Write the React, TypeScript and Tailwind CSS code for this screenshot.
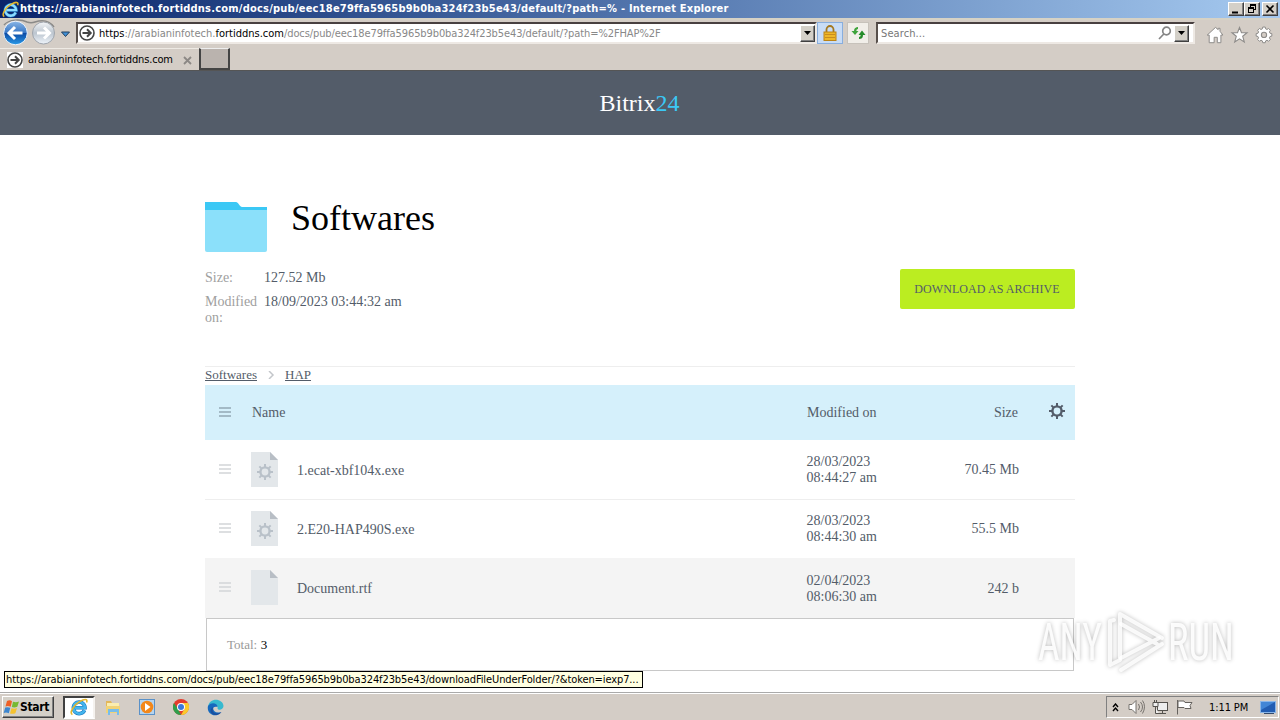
import React from 'react';

interface FileRow {
  name: string;
  date: string;
  time: string;
  size: string;
  program: boolean;
  rowClass: string;
}

const files: FileRow[] = [
  { name: '1.ecat-xbf104x.exe', date: '28/03/2023', time: '08:44:27 am', size: '70.45 Mb', program: true, rowClass: 'h-[60px] border-b border-[#eee]' },
  { name: '2.E20-HAP490S.exe', date: '28/03/2023', time: '08:44:30 am', size: '55.5 Mb', program: true, rowClass: 'h-[58px]' },
  { name: 'Document.rtf', date: '02/04/2023', time: '08:06:30 am', size: '242 b', program: false, rowClass: 'h-[60px] bg-[#f4f4f4]' },
];

const raised = 'border border-t-white border-l-white border-r-[#404040] border-b-[#404040] bg-[#d4d0c8] shadow-[inset_-1px_-1px_0_#808080]';

const Gear: React.FC<{ size: number; color: string; hole: string }> = ({ size, color, hole }) => (
  <svg width={size} height={size} viewBox="0 0 16 16">
    {[0, 45, 90, 135].map(a => (
      <rect key={a} x="7" y="0" width="2" height="16" fill={color} transform={`rotate(${a} 8 8)`} />
    ))}
    <circle cx="8" cy="8" r="5.8" fill={color} />
    <circle cx="8" cy="8" r="3.4" fill={hole} />
  </svg>
);

const Lines: React.FC<{ color: string }> = ({ color }) => (
  <svg width="12" height="10" viewBox="0 0 12 10" fill="none">
    <path d="M0 1h12M0 5h12M0 9h12" stroke={color} strokeWidth="1.6" />
  </svg>
);

const IeIcon: React.FC<{ size: number; color?: string }> = ({ size, color = '#43b5ee' }) => (
  <svg width={size} height={size} viewBox="0 0 18 18" fill="none">
    <path d="M14.5 12.2A5.8 5.8 0 1 1 15 9.7H5" stroke="#1976bd" strokeWidth="3.6" />
    <path d="M14.5 12.2A5.8 5.8 0 1 1 15 9.7H5" stroke={color} strokeWidth="2.5" />
    <path d="M2.4 16.6C-1 14.5 3.8 7 10 3.4 14 .9 18 .4 16.6 4.4" stroke="#e5b72d" strokeWidth="1.6" />
  </svg>
);

const PageIcon = () => (
  <svg className="shrink-0" width="16" height="16" viewBox="0 0 16 16" fill="none">
    <rect width="16" height="16" fill="#fff" />
    <circle cx="8" cy="8" r="7" stroke="#444" strokeWidth="1.6" />
    <path d="M3.5 8h8M8 4.3 11.7 8 8 11.7" stroke="#444" strokeWidth="2" />
  </svg>
);

const DropButton = () => (
  <span className={`flex h-[17px] w-[15px] items-center justify-center ${raised}`}>
    <svg width="7" height="4" viewBox="0 0 7 4"><path d="M0 0h7L3.5 4z" fill="#000" /></svg>
  </span>
);

const TitleBar = () => (
  <div className="flex h-[18px] items-center bg-linear-to-r from-[#0a246a] to-[#a6caf0] pl-[2px] pr-[2px]">
    <IeIcon size={17} color="#8edcff" />
    <span className="ml-px pt-px whitespace-nowrap text-[11px] font-bold tracking-[0.22px] text-white">
      https://arabianinfotech.fortiddns.com/docs/pub/eec18e79ffa5965b9b0ba324f23b5e43/default/?path=% - Internet Explorer
    </span>
    <div className="ml-auto flex">
      <span className={`h-[14px] w-[16px] ${raised}`}>
        <svg width="14" height="12"><path d="M3 9.5h6" stroke="#000" strokeWidth="2" /></svg>
      </span>
      <span className={`h-[14px] w-[16px] ${raised}`}>
        <svg width="14" height="12" fill="none" stroke="#000" shapeRendering="crispEdges">
          <path d="M5 1.5h6M5 2.5h6M5.500 1v3M10.500 1v6M8 6.500h3M3 4.500h6M3 5.500h6M3.500 4v6M8.500 4v6M3 9.500h6" />
        </svg>
      </span>
      <span className={`ml-[2px] h-[14px] w-[16px] ${raised}`}>
        <svg width="14" height="12"><path d="M3.5 2.5l7 7M10.5 2.5l-7 7" stroke="#000" strokeWidth="1.6" /></svg>
      </span>
    </div>
  </div>
);

const NavButtons = () => (
  <svg width="74" height="28" viewBox="0 0 74 28" fill="none">
    <defs>
      <linearGradient id="back" x1="0" y1="0" x2="0" y2="1">
        <stop offset="0" stopColor="#8ab6e6" />
        <stop offset=".48" stopColor="#3a78c6" />
        <stop offset=".52" stopColor="#0d4ca6" />
        <stop offset="1" stopColor="#2a9be8" />
      </linearGradient>
      <linearGradient id="fwd" x1="0" y1="0" x2="0" y2="1">
        <stop offset="0" stopColor="#f4f6f8" />
        <stop offset=".5" stopColor="#bcc5cf" />
        <stop offset="1" stopColor="#eef4fa" />
      </linearGradient>
    </defs>
    <path d="M4 6C9 0 21 0 27 3c3 1 5 1 8 0 6-2 14-2 19 5" stroke="#8b8a88" strokeWidth="1.5" />
    <circle cx="15.500" cy="14" r="11.800" fill="url(#back)" stroke="#f0f4fa" />
    <path d="M9.500 14h13M15 8 9 14l6 6" stroke="#fff" strokeWidth="3" />
    <circle cx="43.500" cy="14" r="11" fill="url(#fwd)" stroke="#9fa5ad" />
    <path d="M37 14h12M44 8.500 49.500 14 44 19.500" stroke="#fff" strokeWidth="3" />
    <path d="M61.500 13h8l-4 4.500z" fill="#3f8fd6" stroke="#24415e" />
  </svg>
);

const AddressBar = () => (
  <div className="flex h-[28px] items-start bg-[#d4cdc6]">
    <div className="-mt-px w-[76px] shrink-0"><NavButtons /></div>
    <div className="mt-[2px] flex h-[22px] w-[741px] items-center border-2 border-t-[#484040] border-l-[#58504c] border-r-[#eee9e4] border-b-[#eee9e4] bg-white pl-[1px]">
      <PageIcon />
      <span className="ml-[4px] pt-[2px] whitespace-nowrap text-[11px] text-[#888]">
        <span className="text-black">https</span>://arabianinfotech.<span className="text-black">fortiddns.com</span>
        <span className="tracking-[-0.1px]">/docs/pub/eec18e79ffa5965b9b0ba324f23b5e43/default/?path=%2FHAP%2F</span>
      </span>
      <span className="ml-auto"><DropButton /></span>
    </div>
    <span className="mt-[2px] flex h-[22px] w-[26px] items-center justify-center border border-[#88aede] bg-[#c8dcf6]">
      <svg width="14" height="16" viewBox="0 0 14 16" fill="none">
        <path d="M3.500 8V4.500a3.500 3.500 0 0 1 7 0V8" stroke="#a47820" strokeWidth="1.800" />
        <rect x="1" y="7" width="12" height="8.500" fill="#eeb727" stroke="#bb8316" />
        <path d="M2 9.500h10M2 12.500h10" stroke="#c98d1d" />
      </svg>
    </span>
    <span className="ml-[4px] mt-[2px] flex h-[22px] w-[22px] items-center justify-center border border-[#c7c2bb] bg-[#f1eee9]">
      <svg width="15" height="14" viewBox="0 0 15 14">
        <path d="M7 1C5 1 3 2 3 5H.5L4 9l3.500-4H5.300Q5.300 3 7 3z" fill="#3ea33b" />
        <path d="M8 13c2.500 0 4-1 4-4h2.500L11 4.500 7.500 9h2.200q0 2-1.700 2z" fill="#258c2b" />
      </svg>
    </span>
    <div className="ml-[7px] mt-[2px] flex h-[22px] w-[319px] items-center border-2 border-t-[#484040] border-l-[#58504c] border-r-[#eee9e4] border-b-[#eee9e4] bg-white pl-[3px] pr-[4px]">
      <span className="pt-[2px] text-[11px] tracking-[0.1px] text-[#777]">Search...</span>
      <svg className="ml-auto mr-[2px]" width="14" height="14" viewBox="0 0 14 14" fill="none" stroke="#858585" strokeWidth="1.700">
        <circle cx="8.500" cy="5" r="3.800" /><path d="M5.800 8 1 13" />
      </svg>
      <DropButton />
    </div>
    <svg className="ml-[10px] mt-[6px]" width="70" height="20" viewBox="0 0 70 20" fill="#fff" stroke="#8d8b89" strokeWidth="1.100">
      <path transform="translate(1.500 .5) scale(.9)" d="M3 9.500H.8L10 1l3 2.500V2h2v3.300L18.200 9.500H16V18h-4v-6H8.500v6H3z" />
      <path d="m34.500 1.500 2 5.200h5.500l-4.300 3.500 1.600 5.700L34.500 12.800l-4.800 3.100 1.600-5.700L27 6.700h5.500z" />
      <path transform="translate(5.900 -1.200) scale(.9)" d="M57.600 2.500h2.800l.4 2 1.500.7 1.800-1.100 2 2-1.100 1.800.7 1.500 2 .4v2.800l-2 .4-.7 1.500 1.100 1.800-2 2-1.800-1.100-1.500.7-.4 2h-2.800l-.4-2-1.500-.7-1.800 1.100-2-2 1.100-1.800-.7-1.500-2-.4V9.800l2-.4.7-1.500-1.100-1.800 2-2 1.800 1.100 1.500-.7z" />
      <circle cx="59" cy="8.900" r="2.600" fill="#d4cdc6" />
    </svg>
  </div>
);

const Tabs = () => (
  <div className="flex h-[23px] border-b border-b-[#555] bg-[#d4cdc6]">
    <div className="flex h-[22px] w-[199px] items-center border-t border-t-[#eeeae4] pl-[7px] pt-px">
      <PageIcon />
      <span className="ml-[5px] pt-px whitespace-nowrap text-[11px] tracking-[-0.16px] text-black">arabianinfotech.fortiddns.com</span>
      <svg className="ml-auto mr-[7px]" width="9" height="9" viewBox="0 0 9 9"><path d="M1 1l7 7M8 1 1 8" stroke="#8c8885" strokeWidth="1.800" /></svg>
    </div>
    <div className="h-[22px] w-[31px] border-2 border-t border-l-[#444] border-t-[#eee] border-r-[#444] border-b-[#444] bg-[#bab3ae]" />
  </div>
);

const FileIcon: React.FC<{ program: boolean }> = ({ program }) => (
  <div className="grid h-[35px] w-[27px] place-items-center">
    <svg className="col-start-1 row-start-1" width="27" height="35" viewBox="0 0 27 35">
      <path d="M0 0h19l8 8v27H0z" fill="#e3e7ea" /><path d="M19 0l8 8h-8z" fill="#b8bec5" />
    </svg>
    {program && <div className="col-start-1 row-start-1 mt-[5px] ml-[1px]"><Gear size={16} color="#b9c1c9" hole="#e3e7ea" /></div>}
  </div>
);

const Row: React.FC<{ file: FileRow }> = ({ file }) => (
  <div className={`flex items-center text-[14px] leading-[16px] text-[#535c69] ${file.rowClass}`}>
    <span className="ml-[14px] w-[32px] pb-[2px]"><Lines color="#d2d5d8" /></span>
    <span className="pb-px"><FileIcon program={file.program} /></span>
    <span className="ml-[19px] mt-[2px] w-[509.500px]">{file.name}</span>
    <span className={file.program ? 'w-[110px]' : 'w-[110px] pt-[2px]'}>{file.date}<br />{file.time}</span>
    <span className={file.program ? 'w-[102.500px] text-right' : 'w-[102.500px] pt-[2px] text-right'}>{file.size}</span>
  </div>
);

const Watermark = () => (
  <svg className="absolute left-[1030px] top-[531px] overflow-visible drop-shadow-[0_0_2px_rgba(0,0,0,0.3)]" width="212" height="78" viewBox="0 0 212 78" fill="none">
    <g fill="#fff" fillOpacity=".9" fontFamily="Roboto" fontSize="52">
      <text x="8" y="58" textLength="64" lengthAdjust="spacingAndGlyphs">ANY</text>
      <text x="138" y="58" textLength="66" lengthAdjust="spacingAndGlyphs">RUN</text>
    </g>
    <g stroke="#fff" strokeWidth="4" strokeOpacity=".85" strokeLinecap="round" strokeLinejoin="round">
      <path d="M90 56V12l42 24" /><path d="M84 18l-4 1v44l10-5" />
      <path d="M91 22l36 20M91 56l38-20M91 68l41-26" />
    </g>
  </svg>
);

const Page = () => (
  <div className="relative h-[621px] bg-white [font-family:'Liberation_Serif',serif]">
    <div className="flex h-[64px] items-center justify-center bg-[#535c69] pr-[1px] text-[24px] text-white">
      Bitrix<span className="text-[#3bc8f5]">24</span>
    </div>
    <main className="mx-auto w-[870px] pt-[67px]">
      <div className="flex h-[50px]">
        <svg width="62" height="50" viewBox="0 0 62 50">
          <path d="M0 0h31c2 0 4 5 6 5h25v5H0z" fill="#3bc8f5" />
          <path d="M0 8h62v40q0 2-2 2H2q-2 0-2-2z" fill="#8be0fa" />
        </svg>
        <h1 className="ml-[24px] -mt-[5px] text-[36px] leading-[42px] text-black">Softwares</h1>
      </div>
      <div className="mt-[17px] flex h-[98px] justify-between border-b border-[#eee] text-[14px] leading-[16px]">
        <div className="grid w-[220px] grid-cols-[59px_1fr] content-start gap-y-[8px] pt-px text-[#535c69]">
          <span className="text-[#a0a0a0]">Size:</span><span>127.52 Mb</span>
          <span className="text-[#a0a0a0]">Modified on:</span><span>18/09/2023 03:44:32 am</span>
        </div>
        <button className="h-[40px] w-[175px] rounded-[2px] bg-[#bbed21] pr-[1px] text-[12px] tracking-[0.08px] text-[#535c69]">DOWNLOAD AS ARCHIVE</button>
      </div>
      <div className="flex h-[18px] items-center pb-[3px] text-[13px] leading-[16px] text-[#535c69]">
        <span className="w-[62px] underline">Softwares</span>
        <svg width="18" height="8" viewBox="0 0 18 8" fill="none"><path d="m2 0 4 4-4 4" stroke="#c3c6ca" strokeWidth="1.500" /></svg>
        <span className="underline">HAP</span>
      </div>
      <div className="flex h-[55px] items-center bg-[#d5f0fb] text-[14px] text-[#535c69]">
        <span className="ml-[14px] w-[33px] pb-[2px]"><Lines color="#92a8b5" /></span>
        <span className="w-[555px]">Name</span>
        <span className="w-[110px]">Modified on</span>
        <span className="w-[101px] text-right">Size</span>
        <span className="ml-[31px] -mt-[4px]"><Gear size={16} color="#535c69" hole="#d5f0fb" /></span>
      </div>
      {files.map(file => <Row key={file.name} file={file} />)}
      <div className="mx-px flex h-[53px] items-center border border-[#c8c8c8] bg-white pl-[20px] text-[13px] text-[#999]">
        Total:<span className="ml-[3.500px] text-black">3</span>
      </div>
    </main>
    <Watermark />
  </div>
);

const Taskbar = () => (
  <div className="flex h-[28px] items-center border-t border-[#aaa] bg-[#d4cdc6] pl-[2px] pt-[1px] pr-px shadow-[inset_0_1px_0_#fff]">
    <span className={`flex h-[22px] w-[52px] items-center ${raised}`}>
      <svg width="17" height="17" viewBox="0 0 17 17">
        <path d="M4 2q3-1.500 5 .3L7.700 7.800Q5 6.500 2.500 7.500z" fill="#ee6027" />
        <path d="M10 2.700q3 1 6-.2l-1.700 5.300q-3 1.200-5.500.2z" fill="#77b934" />
        <path d="M2.200 8.600q2.500-1 5.100.2l-1.500 5.400Q3 13 .7 14z" fill="#3d86cf" />
        <path d="M8.500 9.200q3 .9 5.500-.1l-1.600 5.200q-2.700 1-5.400.2z" fill="#f5c22f" />
      </svg>
      <span className="text-[12px] font-bold tracking-[-0.3px]">Start</span>
    </span>
    <span className="ml-[9px] flex h-[23px] w-[32px] items-center justify-center border-2 border-t-[#404040] border-l-[#404040] border-r-[#f5f2ee] border-b-white bg-white"><IeIcon size={18} /></span>
    <svg className="ml-[9px]" width="18" height="18" viewBox="0 0 18 18">
      <path d="M2 3h5l1 2h7v10H2z" fill="#e3b75a" /><path d="M3 5h12v7H3z" fill="#faedb0" />
      <path d="M2 8h14v7H2z" fill="#f1d377" /><path d="M4 17v-6h11v6h-2v-3H6v3z" fill="#77bdeb" />
    </svg>
    <svg className="ml-[17px]" width="16" height="16" viewBox="0 0 16 16">
      <rect x=".5" y=".5" width="15" height="15" fill="#b5d4ef" stroke="#5a91c8" />
      <circle cx="8" cy="8" r="6.300" fill="#f38719" /><path d="m6 4 5.500 4L6 12z" fill="#fff" />
    </svg>
    <svg className="ml-[18px]" width="16" height="16" viewBox="0 0 16 16">
      <circle cx="8" cy="8" r="8" fill="#e33c2e" />
      <path d="M1 4l4 6 3 6A8 8 0 0 1 1 4z" fill="#2f9e4c" />
      <path d="M8 4h7a8 8 0 0 1-7 12l4-7z" fill="#fbca2c" />
      <circle cx="8" cy="8" r="4" fill="#fff" /><circle cx="8" cy="8" r="3" fill="#3b78dc" />
    </svg>
    <svg className="ml-[18px]" width="17" height="17" viewBox="0 0 17 17">
      <path d="M1 8C2-2 16-1 16.500 7c0 4-6 5-6 2 1-4-5-5-9.500-1z" fill="#37b9cf" />
      <path d="M1 7c4-5 10-2 9.500 1C3 6 6 16 14 13 9 20-1 15 1 7z" fill="#1769bd" />
      <path d="M6 8c-2 6 3 8 8.500 5-3 5-11 3-11-1 0-2 1-3 2.500-4z" fill="#1c4f9e" />
    </svg>
    <div className="ml-auto flex h-[22px] w-[173px] items-center border border-t-[#808080] border-l-[#808080] border-r-white border-b-white pl-[5px]">
      <svg width="7" height="9" viewBox="0 0 7 9" fill="none" stroke="#000" strokeWidth="1.400"><path d="m1 4 2.500-3L6 4M1 8l2.500-3L6 8" /></svg>
      <svg className="ml-[9px]" width="17" height="16" viewBox="0 0 17 16" fill="#fff" stroke="#77736e">
        <path d="M1 5.500h3l4-4v13l-4-4H1z" /><path d="M10.500 5q2 3 0 6M12.500 3q4 5 0 10M14.500 1.500q4 6 0 13" fill="none" />
      </svg>
      <svg className="ml-[7px]" width="17" height="16" viewBox="0 0 17 16" fill="#eee" stroke="#55524e">
        <rect x="5.500" y="3.500" width="10" height="8" /><path d="M7 14.500h7M10.500 12v2M1 3.500h5v4H1zM2.500 1v2M4.500 1v2M3.500 8v6.500H7" />
      </svg>
      <svg className="ml-[7px]" width="17" height="16" viewBox="0 0 17 16" fill="#fff" stroke="#66625e">
        <path d="M1.500 1v14.500M2 2h6l1 1.500h7l-2 3 1 3H9L8 8.500H2z" />
      </svg>
      <span className="ml-[16px] pt-[2px] whitespace-nowrap text-[11px] tracking-[-0.1px]">1:11 PM</span>
      <svg className="ml-auto mr-[2px]" width="16" height="13" viewBox="0 0 16 13">
        <rect x=".5" y=".5" width="15" height="11" fill="#225db2" stroke="#8ab6e8" /><path d="M1 1h14L1 9z" fill="#4286d6" /><path d="M4 12.500h10" stroke="#354b6b" />
      </svg>
    </div>
  </div>
);

const App: React.FC = () => (
  <div className="relative h-[720px] w-[1280px] overflow-hidden bg-[#d4cdc6] text-black [font-family:'DejaVu_Sans_Condensed','DejaVu_Sans',sans-serif] [font-stretch:condensed]">
    <TitleBar />
    <div className="h-[2px] bg-[#d6d2c5]" />
    <AddressBar />
    <Tabs />
    <Page />
    <Taskbar />
    <div className="absolute left-[4px] top-[671px] flex h-[17px] w-[639px] items-center whitespace-nowrap border border-black bg-[#ffffe1] pl-[1px] pt-px text-[11px] tracking-[-0.1px]">
      https://arabianinfotech.fortiddns.com/docs/pub/eec18e79ffa5965b9b0ba324f23b5e43/downloadFileUnderFolder/?&amp;token=iexp7...
    </div>
  </div>
);

export default App;
